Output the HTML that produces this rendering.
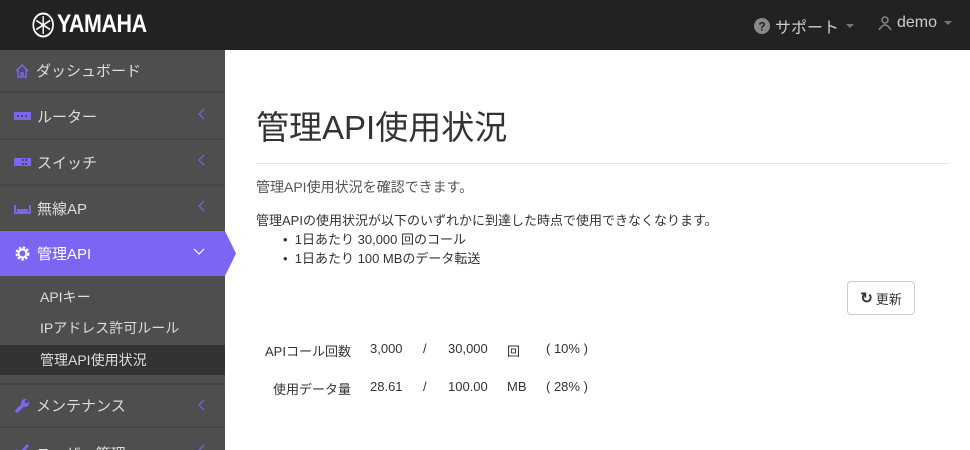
<!DOCTYPE html>
<html><head><meta charset="utf-8"><style>
*{margin:0;padding:0;box-sizing:border-box}
html,body{width:970px;height:450px;overflow:hidden}
body{font-family:"Liberation Sans","Noto Sans CJK JP",sans-serif;background:#fff;position:relative;color:#333}
.hdr{position:absolute;left:0;top:0;width:970px;height:50px;background:#222}
.logo{position:absolute;left:32px;top:10px;color:#fff;font-weight:bold;font-size:25px;letter-spacing:-0.5px;display:flex;align-items:center;gap:3px;transform:scaleX(0.86);transform-origin:left center}
.hr{position:absolute;top:14px;color:#ccc;font-size:16px;display:flex;align-items:center;gap:5px}
.car{display:inline-block;border-left:4px solid transparent;border-right:4px solid transparent;border-top:4px solid #777;margin-left:2px}
.side{position:absolute;left:0;top:50px;width:225px;height:400px;background:#4e4e4e;overflow:hidden}
.it{position:absolute;left:0;width:225px;height:44px;color:#ddd;font-size:15px;border-bottom:2px solid #444;display:flex;align-items:center;padding-left:14px;gap:6px}
.it .ch{position:absolute;right:20px;top:14px}
.act{background:#7a66f2;color:#fff;border:none}
.sub{position:absolute;left:0;width:225px;height:30px;color:#ddd;font-size:14px;padding-left:40px;line-height:30px}
h1{position:absolute;left:256px;top:101px;font-size:33px;font-weight:normal;color:#333}
.line{position:absolute;left:256px;top:163px;width:692px;height:1px;background:#e5e5e5}
.t{position:absolute;left:256px;font-size:13px;color:#333}
.btn{position:absolute;left:847px;top:281px;width:68px;height:34px;border:1px solid #ccc;border-radius:4px;font-size:13px;display:flex;align-items:center;justify-content:center;gap:3px}
.c{position:absolute;font-size:13px}
</style></head><body>
<div class="hdr">
 <div class="logo"><svg width="26" height="26" viewBox="0 0 26 26"><circle cx="13" cy="13" r="11.5" fill="none" stroke="#fff" stroke-width="2"/><g stroke="#fff" stroke-width="1.6"><line x1="13" y1="4" x2="13" y2="22"/><line x1="5" y1="8.5" x2="21" y2="17.5"/><line x1="5" y1="17.5" x2="21" y2="8.5"/></g></svg>YAMAHA</div>
 <div class="hr" style="left:754px"><svg width="16" height="16"><circle cx="8" cy="8" r="8" fill="#888"/><text x="8" y="12.5" font-size="12" font-weight="bold" text-anchor="middle" fill="#222" font-family="Liberation Sans">?</text></svg>サポート<span class="car"></span></div>
 <div class="hr" style="left:878px"><svg width="14" height="14"><circle cx="7" cy="4" r="3" fill="none" stroke="#888" stroke-width="1.5"/><path d="M1 14 Q7 4 13 14" fill="none" stroke="#888" stroke-width="1.5"/></svg>demo<span class="car"></span></div>
</div>
<div class="side">
 <div class="it" style="top:0;height:43px"><svg width="16" height="16"><path d="M2 8 L8 2 L14 8 M4 7 V14 H7 V10 H9 V14 H12 V7" fill="none" stroke="#7a66f2" stroke-width="1.5"/></svg>ダッシュボード</div>
 <div class="it" style="top:44px;height:46px"><svg width="17" height="8"><rect width="17" height="8" fill="#7a66f2"/><g fill="#4e4e4e"><rect x="3" y="3" width="2" height="2"/><rect x="7" y="3" width="2" height="2"/><rect x="11" y="3" width="2" height="2"/></g></svg>ルーター<svg class="ch" width="8" height="12"><path d="M7 1 L2 6 L7 11" fill="none" stroke="#7a66f2" stroke-width="1.2"/></svg></div>
 <div class="it" style="top:90px;height:46px"><svg width="17" height="8"><rect width="17" height="8" fill="#7a66f2"/><g fill="#4e4e4e"><rect x="8" y="1" width="2" height="2"/><rect x="11" y="1" width="2" height="2"/><rect x="8" y="5" width="2" height="2"/><rect x="11" y="5" width="2" height="2"/></g></svg>スイッチ<svg class="ch" width="8" height="12"><path d="M7 1 L2 6 L7 11" fill="none" stroke="#7a66f2" stroke-width="1.2"/></svg></div>
 <div class="it" style="top:136px;height:45px;border:none"><svg width="17" height="10"><path d="M1 1 V9 H16 V1" fill="none" stroke="#7a66f2" stroke-width="2"/><rect x="3" y="5" width="11" height="3" fill="#7a66f2"/></svg>無線AP<svg class="ch" width="8" height="12"><path d="M7 1 L2 6 L7 11" fill="none" stroke="#7a66f2" stroke-width="1.2"/></svg></div>
 <div class="it act" style="top:181px;height:45px"><svg width="17" height="17" viewBox="0 0 17 17"><circle cx="8.5" cy="8.5" r="5.5" fill="none" stroke="#fff" stroke-width="3" stroke-dasharray="2.2 1.5"/><circle cx="8.5" cy="8.5" r="4" fill="none" stroke="#fff" stroke-width="2"/></svg>管理API<svg class="ch" width="12" height="8" style="top:17px;right:20px"><path d="M1 1 L6 6 L11 1" fill="none" stroke="#fff" stroke-width="1.2"/></svg></div>
 <div class="sub" style="top:232px">APIキー</div>
 <div class="sub" style="top:263px">IPアドレス許可ルール</div>
 <div class="sub" style="top:295px;background:#333">管理API使用状況</div>
 <div class="it" style="top:333px;height:45px;border-top:2px solid #444"><svg width="16" height="16"><path d="M2 14 L9 7" stroke="#7a66f2" stroke-width="3.5"/><circle cx="11" cy="5" r="4" fill="#7a66f2"/><circle cx="12.5" cy="3.5" r="1.7" fill="#4e4e4e"/></svg>メンテナンス<svg class="ch" width="8" height="12"><path d="M7 1 L2 6 L7 11" fill="none" stroke="#7a66f2" stroke-width="1.2"/></svg></div>
 <div class="it" style="top:380px;height:20px;border:none;align-items:flex-start;padding-top:13px;overflow:hidden"><svg width="16" height="14"><path d="M2 7 L6 11 L14 2" fill="none" stroke="#7a66f2" stroke-width="3"/></svg>ユーザー管理<svg class="ch" width="8" height="12"><path d="M7 1 L2 6 L7 11" fill="none" stroke="#7a66f2" stroke-width="1.2"/></svg></div>
</div>
<svg style="position:absolute;left:225px;top:231px" width="12" height="45"><path d="M0 0 L11 22.5 L0 45Z" fill="#7a66f2"/></svg>
<h1>管理API使用状況</h1>
<div class="line"></div>
<div class="t" style="top:177px;font-size:14px;color:#555">管理API使用状況を確認できます。</div>
<div class="t" style="top:210px">管理APIの使用状況が以下のいずれかに到達した時点で使用できなくなります。</div>
<div class="t" style="top:229px;left:283px">•&nbsp;&nbsp;1日あたり 30,000 回のコール</div>
<div class="t" style="top:248px;left:283px">•&nbsp;&nbsp;1日あたり 100 MBのデータ転送</div>
<div class="btn"><span style="font-size:15px;font-weight:bold">↻</span>更新</div>
<div class="c" style="left:265px;top:341px">APIコール回数</div>
<div class="c" style="left:370px;top:341px">3,000</div>
<div class="c" style="left:423px;top:341px">/</div>
<div class="c" style="left:448px;top:341px">30,000</div>
<div class="c" style="left:507px;top:341px">回</div>
<div class="c" style="left:546px;top:341px">( 10% )</div>
<div class="c" style="left:273px;top:379px">使用データ量</div>
<div class="c" style="left:370px;top:379px">28.61</div>
<div class="c" style="left:423px;top:379px">/</div>
<div class="c" style="left:448px;top:379px">100.00</div>
<div class="c" style="left:507px;top:379px">MB</div>
<div class="c" style="left:546px;top:379px">( 28% )</div>
</body></html>
